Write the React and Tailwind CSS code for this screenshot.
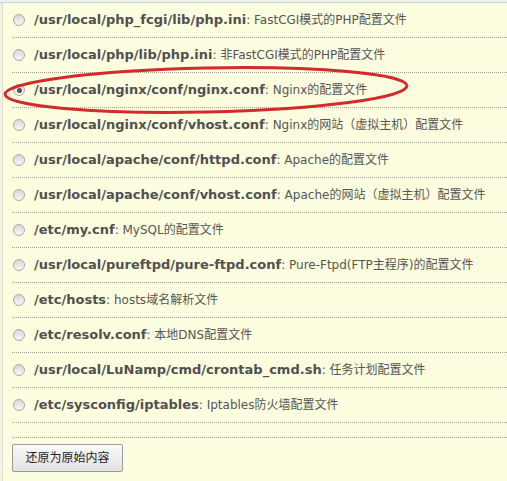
import React from 'react';

const files = [
  { path: '/usr/local/php_fcgi/lib/php.ini', desc: 'FastCGI模式的PHP配置文件' },
  { path: '/usr/local/php/lib/php.ini', desc: '非FastCGI模式的PHP配置文件' },
  { path: '/usr/local/nginx/conf/nginx.conf', desc: 'Nginx的配置文件', checked: true },
  { path: '/usr/local/nginx/conf/vhost.conf', desc: 'Nginx的网站（虚拟主机）配置文件' },
  { path: '/usr/local/apache/conf/httpd.conf', desc: 'Apache的配置文件' },
  { path: '/usr/local/apache/conf/vhost.conf', desc: 'Apache的网站（虚拟主机）配置文件' },
  { path: '/etc/my.cnf', desc: 'MySQL的配置文件' },
  { path: '/usr/local/pureftpd/pure-ftpd.conf', desc: 'Pure-Ftpd(FTP主程序)的配置文件' },
  { path: '/etc/hosts', desc: 'hosts域名解析文件' },
  { path: '/etc/resolv.conf', desc: '本地DNS配置文件' },
  { path: '/usr/local/LuNamp/cmd/crontab_cmd.sh', desc: '任务计划配置文件' },
  { path: '/etc/sysconfig/iptables', desc: 'Iptables防火墙配置文件' },
];

const Radio = ({ checked }) => (
  <span className="w-[12px] h-[12px] rounded-full border border-[#a8a8a8] bg-gradient-to-b from-[#d8d8d8] to-[#f8f8f8] shrink-0 flex items-center justify-center">
    {checked && <span className="w-[5px] h-[5px] rounded-full bg-[#555]"></span>}
  </span>
);

export default function App() {
  return (
    <div className="relative w-[507px] h-[481px] overflow-hidden bg-[#fdfddf] font-['DejaVu_Sans','Noto_Sans_CJK_SC',sans-serif]">
      <div className="h-[3px] border-b border-[#c8d4dc] bg-[#eef2ee]"></div>
      <div className="flex h-full">
        <div className="w-[3px] border-r border-[#dcdcc8] bg-[#f4f4e2]"></div>
        <div className="flex-1 pl-[9px]">
          {files.map((f) => (
            <div key={f.path} className="h-[35px] border-b border-dotted border-[#a0a090] flex items-center pl-[1px]">
              <Radio checked={f.checked} />
              <span className="ml-[9px] text-[12px] text-[#555] whitespace-nowrap">
                <b className="font-bold text-[13px] text-[#505050]">{f.path}</b>: {f.desc}
              </span>
            </div>
          ))}
          <div className="h-[15px] border-b border-dotted border-[#a0a090]"></div>
          <div className="pt-[6px]">
            <button className="h-[28px] w-[111px] border border-[#9a9a9a] bg-gradient-to-b from-[#fafafa] to-[#e2e2e2] text-[12px] text-[#222] rounded-[2px]">
              还原为原始内容
            </button>
          </div>
        </div>
      </div>
      <svg className="absolute left-0 top-0 pointer-events-none" width="507" height="481">
        <ellipse cx="206" cy="90" rx="201" ry="22" fill="none" stroke="#d42a2a" strokeWidth="3" transform="rotate(-1.2 206 90)" />
      </svg>
    </div>
  );
}
